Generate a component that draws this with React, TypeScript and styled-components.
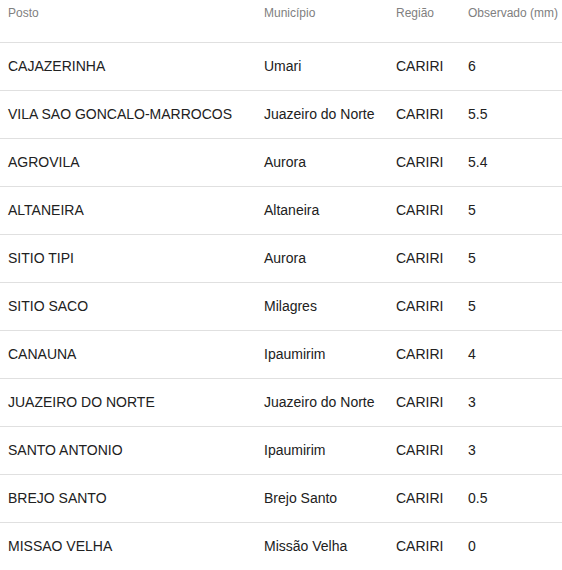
import * as React from 'react';
import styled, { createGlobalStyle } from 'styled-components';

const GlobalStyle = createGlobalStyle`
	html, body {
		margin: 0;
		padding: 0;
		background: #fff;
		font-family: "Liberation Sans", Arial, sans-serif;
	}
	* {
		box-sizing: border-box;
	}
`;

interface IRow {
	posto: string;
	municipio: string;
	regiao: string;
	observado: string;
}

const rows: IRow[] = [
	{ posto: 'CAJAZERINHA', municipio: 'Umari', regiao: 'CARIRI', observado: '6' },
	{ posto: 'VILA SAO GONCALO-MARROCOS', municipio: 'Juazeiro do Norte', regiao: 'CARIRI', observado: '5.5' },
	{ posto: 'AGROVILA', municipio: 'Aurora', regiao: 'CARIRI', observado: '5.4' },
	{ posto: 'ALTANEIRA', municipio: 'Altaneira', regiao: 'CARIRI', observado: '5' },
	{ posto: 'SITIO TIPI', municipio: 'Aurora', regiao: 'CARIRI', observado: '5' },
	{ posto: 'SITIO SACO', municipio: 'Milagres', regiao: 'CARIRI', observado: '5' },
	{ posto: 'CANAUNA', municipio: 'Ipaumirim', regiao: 'CARIRI', observado: '4' },
	{ posto: 'JUAZEIRO DO NORTE', municipio: 'Juazeiro do Norte', regiao: 'CARIRI', observado: '3' },
	{ posto: 'SANTO ANTONIO', municipio: 'Ipaumirim', regiao: 'CARIRI', observado: '3' },
	{ posto: 'BREJO SANTO', municipio: 'Brejo Santo', regiao: 'CARIRI', observado: '0.5' },
	{ posto: 'MISSAO VELHA', municipio: 'Missão Velha', regiao: 'CARIRI', observado: '0' },
];

const Table = styled.div`
	display: flex;
	flex-direction: column;
	width: 562px;
`;

const Row = styled.div<{ $header?: boolean }>`
	display: grid;
	grid-template-columns: 256px 132px 72px 1fr;
	height: ${p => (p.$header ? '42px' : '48px')};
	align-items: ${p => (p.$header ? 'start' : 'center')};
	border-top: ${p => (p.$header ? 'none' : '1px solid #e0e0e0')};
`;

const HeadCell = styled.div`
	padding: 6px 0 0 8px;
	font-size: 12px;
	line-height: 14px;
	color: #808080;
	white-space: nowrap;
`;

const Cell = styled.div`
	padding: 0 0 2px 8px;
	font-size: 14px;
	line-height: 16px;
	color: #212121;
	white-space: nowrap;
`;

export default function App() {
	return (
		<>
			<GlobalStyle />
			<Table role="table">
				<Row $header role="row">
					<HeadCell>Posto</HeadCell>
					<HeadCell>Município</HeadCell>
					<HeadCell>Região</HeadCell>
					<HeadCell>Observado (mm)</HeadCell>
				</Row>
				{rows.map(r => (
					<Row key={r.posto} role="row">
						<Cell>{r.posto}</Cell>
						<Cell>{r.municipio}</Cell>
						<Cell>{r.regiao}</Cell>
						<Cell>{r.observado}</Cell>
					</Row>
				))}
			</Table>
		</>
	);
}
